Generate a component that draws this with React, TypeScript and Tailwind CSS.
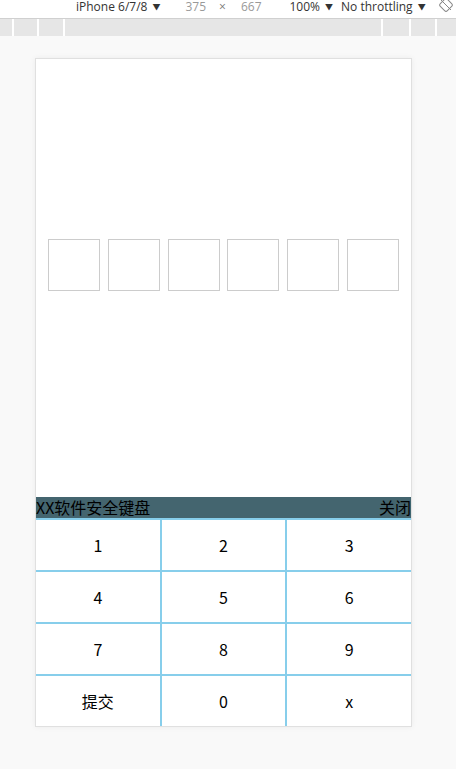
import React from "react";

const keys = ["1", "2", "3", "4", "5", "6", "7", "8", "9", "提交", "0", "x"];

function Tri() {
  return <span className="ml-[5px] text-[8px] leading-[14px] text-[#333]">▼</span>;
}

export default function App() {
  return (
    <div
      className="w-[456px] h-[769px] bg-[#f9f9f9] flex flex-col overflow-hidden"
      style={{ fontFamily: '"Segoe UI","Open Sans","Noto Sans CJK SC",sans-serif' }}
    >
      <div className="h-[19px] bg-white border-b border-[#d0d0d0] flex items-start pl-[76px] text-[12px] leading-[14px] text-[#333] whitespace-nowrap">
        <span className="flex items-start">iPhone 6/7/8<Tri /></span>
        <span className="ml-[25px] text-[#999]">375</span>
        <span className="ml-[13px] text-[#777]">×</span>
        <span className="ml-[15px] text-[#999]">667</span>
        <span className="ml-[28px] flex items-start">100%<Tri /></span>
        <span className="ml-[8px] flex items-start">No throttling<Tri /></span>
        <svg className="ml-[12px] shrink-0 -mt-[3px]" width="16" height="16" viewBox="0 0 16 16">
          <rect x="3" y="3" width="10" height="10" rx="2" transform="rotate(45 8 8)" fill="none" stroke="#888" strokeWidth="1" />
          <line x1="3" y1="3" x2="13" y2="13" stroke="#888" strokeWidth="1" />
        </svg>
      </div>
      <div className="h-[17px] bg-[#e6e6e6] flex shrink-0">
        <div className="w-[14px] border-r-2 border-white" />
        <div className="w-[25px] border-r-2 border-white" />
        <div className="w-[26px] border-r-2 border-white" />
        <div className="w-[318px] border-r-2 border-white" />
        <div className="w-[28px] border-r-2 border-white" />
        <div className="w-[26px] border-r-2 border-white" />
        <div className="flex-1" />
      </div>
      <div className="pt-[22px] pl-[35px]">
        <div className="w-[377px] h-[669px] border border-[#e0e0e0] bg-white shadow-[0_0_6px_rgba(0,0,0,0.06)] flex flex-col">
          <div className="h-[438px] flex justify-between px-[12px] pt-[180px]">
            {[0, 1, 2, 3, 4, 5].map((i) => (
              <div key={i} className="w-[52px] h-[52px] border border-[#cccccc]" />
            ))}
          </div>
          <div
            className="h-[21px] bg-[#44656f] flex justify-between items-center text-[16px] leading-[21px] text-black"
            style={{ fontFamily: '"Noto Sans CJK SC",sans-serif' }}
          >
            <span>XX软件安全键盘</span>
            <span>关闭</span>
          </div>
          <div className="grid grid-cols-3 gap-[2px] pt-[2px] bg-[#87ceeb] flex-1">
            {keys.map((k) => (
              <div
                key={k}
                className="bg-white h-[50px] flex items-center justify-center text-[16px] text-black"
                style={{ fontFamily: '"Noto Sans CJK SC",sans-serif' }}
              >
                {k}
              </div>
            ))}
          </div>
        </div>
      </div>
    </div>
  );
}
